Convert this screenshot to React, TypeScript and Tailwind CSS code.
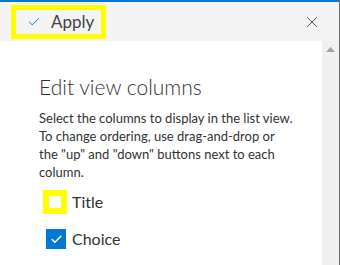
import { Check, X } from 'lucide-react';

const COLUMNS = [
  { label: 'Title', checked: false, highlight: true },
  { label: 'Choice', checked: true, highlight: false },
];

const DESCRIPTION = [
  'Select the columns to display in the list view.',
  'To change ordering, use drag-and-drop or',
  'the "up" and "down" buttons next to each',
  'column.',
];

export default function App() {
  return (
    <div className="w-[340px] h-[265px] overflow-hidden flex flex-col bg-white border-r border-[#6b6b6b] text-[#333] font-['Segoe_UI',Lato,'Open_Sans',sans-serif]">
      {/* Header */}
      <div className="h-[41px] shrink-0 bg-[#f4f4f4] border-t-2 border-[#0078d4] flex items-center justify-between pl-[11px] pr-[18px]">
        <div className="h-[34px] w-[95px] border-[5px] border-[#ffff00] flex items-center gap-[10px] pl-[11px]">
          <Check size={14} strokeWidth={1.6} className="text-[#0078d4]" />
          <span className="text-[17px] leading-none text-[#444]">Apply</span>
        </div>
        <X size={18} strokeWidth={1.3} className="text-[#555]" />
      </div>

      <div className="flex flex-1 min-h-0">
        {/* Content */}
        <div className="flex-1 pl-[39px] pt-[32px]">
          <h2 className="font-['Lato_Light','Inter',sans-serif] text-[21px] font-light leading-[28px] text-[#333]">
            Edit view columns
          </h2>
          <p className="mt-[8px] text-[13px] leading-[18px] text-[#333] whitespace-nowrap">
            {DESCRIPTION.map((line) => (
              <span key={line} className="block">
                {line}
              </span>
            ))}
          </p>
          <div className="mt-[9px] flex flex-col gap-[13px]">
            {COLUMNS.map((c) => (
              <div key={c.label} className="flex items-center h-[24px]">
                <div className="w-[33px] flex pl-[4px]">
                  {c.highlight ? (
                    <div className="w-[24px] h-[24px] border-[6px] border-[#ffff00] bg-white" />
                  ) : (
                    <div
                      className={`w-[20px] h-[20px] ml-[3px] flex items-center justify-center ${
                        c.checked ? 'bg-[#0078d4]' : 'border border-[#333] bg-white'
                      }`}
                    >
                      {c.checked && <Check size={13} strokeWidth={3} className="text-white" />}
                    </div>
                  )}
                </div>
                <span className="text-[16px] leading-none text-[#333]">{c.label}</span>
              </div>
            ))}
          </div>
        </div>

        {/* Scrollbar */}
        <div className="w-[17px] shrink-0 bg-[#f0f0f0] flex justify-center pt-[6px]">
          <svg width="9" height="5" viewBox="0 0 9 5">
            <path d="M4.5 0 L9 5 L0 5 Z" fill="#a3a3a3" />
          </svg>
        </div>
      </div>
    </div>
  );
}
